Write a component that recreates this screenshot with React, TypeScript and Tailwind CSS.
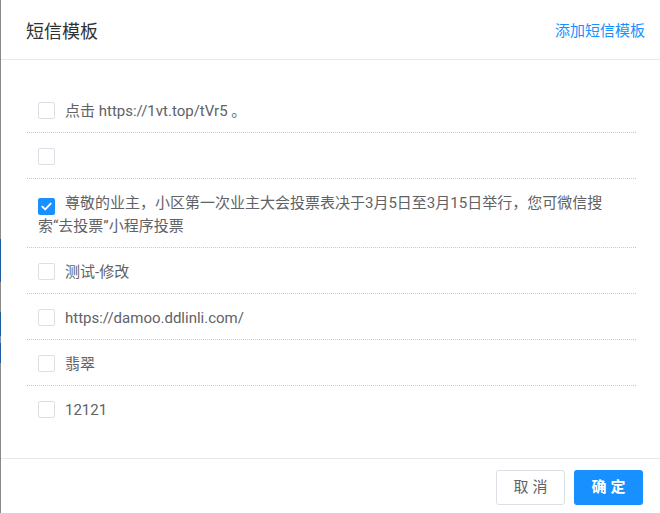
import React from "react";

const rows: { text: string; checked?: boolean }[] = [
  { text: "点击 https://1vt.top/tVr5 。" },
  { text: "" },
  {
    text: "尊敬的业主，小区第一次业主大会投票表决于3月5日至3月15日举行，您可微信搜索“去投票”小程序投票",
    checked: true,
  },
  { text: "测试-修改" },
  { text: "https://damoo.ddlinli.com/" },
  { text: "翡翠" },
  { text: "12121" },
];

function Box({ checked }: { checked?: boolean }) {
  if (checked) {
    return (
      <span className="inline-flex items-center justify-center w-[17px] h-[17px] rounded-[2px] bg-[#1890ff] align-[-3px] mr-[10px]">
        <svg width="11" height="9" viewBox="0 0 11 9" fill="none">
          <path d="M1.3 4.6 L4.2 7.4 L9.7 1.6" stroke="white" strokeWidth="1.9" strokeLinecap="round" strokeLinejoin="round" />
        </svg>
      </span>
    );
  }
  return (
    <span className="inline-block w-[17px] h-[17px] rounded-[2px] border border-[#dcdfe6] bg-white align-[-3px] mr-[10px]" />
  );
}

export default function App() {
  return (
    <div
      className="flex w-[660px] h-[513px] overflow-hidden bg-white"
      style={{ fontFamily: 'Roboto, "Noto Sans CJK SC", sans-serif' }}
    >
      <div className="flex flex-col w-[1px] shrink-0">
        <div className="h-[239px] bg-[#8a8a8a]" />
        <div className="h-[43px] bg-[#1f5b9f]" />
        <div className="h-[30px] bg-[#8a8a8a]" />
        <div className="h-[24px] bg-[#1f5b9f]" />
        <div className="h-[7px] bg-[#6f8fb3]" />
        <div className="h-[20px] bg-[#1f5b9f]" />
        <div className="flex-1 bg-[#8a8a8a]" />
      </div>
      <div className="flex flex-col flex-1">
        <div className="h-[60px] shrink-0 flex items-center justify-between pl-[25px] pr-[15px] border-b border-[#e8e8e8] pt-[4px]">
          <span className="text-[18px] text-[#303133]">短信模板</span>
          <span className="text-[15px] text-[#1890ff]">添加短信模板</span>
        </div>
        <div className="flex-1 pt-[27px] pb-[26px] pl-[26px] pr-[24px]">
          {rows.map((r, i) => (
            <div
              key={i}
              className={`pt-[13px] pb-[9px] pl-[11px] pr-[12px] text-[15px] leading-[23px] text-[#606266] ${
                i < rows.length - 1 ? "border-b border-dotted border-[#c8c8c8]" : ""
              }`}
            >
              <Box checked={r.checked} />
              {r.text}
            </div>
          ))}
        </div>
        <div className="h-[55px] shrink-0 border-t border-[#e8e8e8] flex justify-end items-start pt-[11px] pr-[17px] gap-[9px]">
          <button className="w-[69px] h-[35px] rounded-[3px] border border-[#dcdfe6] bg-white text-[15px] text-[#606266] tracking-[4px] pl-[4px]">
            取消
          </button>
          <button className="w-[69px] h-[35px] rounded-[3px] bg-[#1890ff] text-[15px] text-white font-semibold tracking-[4px] pl-[4px]">
            确定
          </button>
        </div>
      </div>
    </div>
  );
}
